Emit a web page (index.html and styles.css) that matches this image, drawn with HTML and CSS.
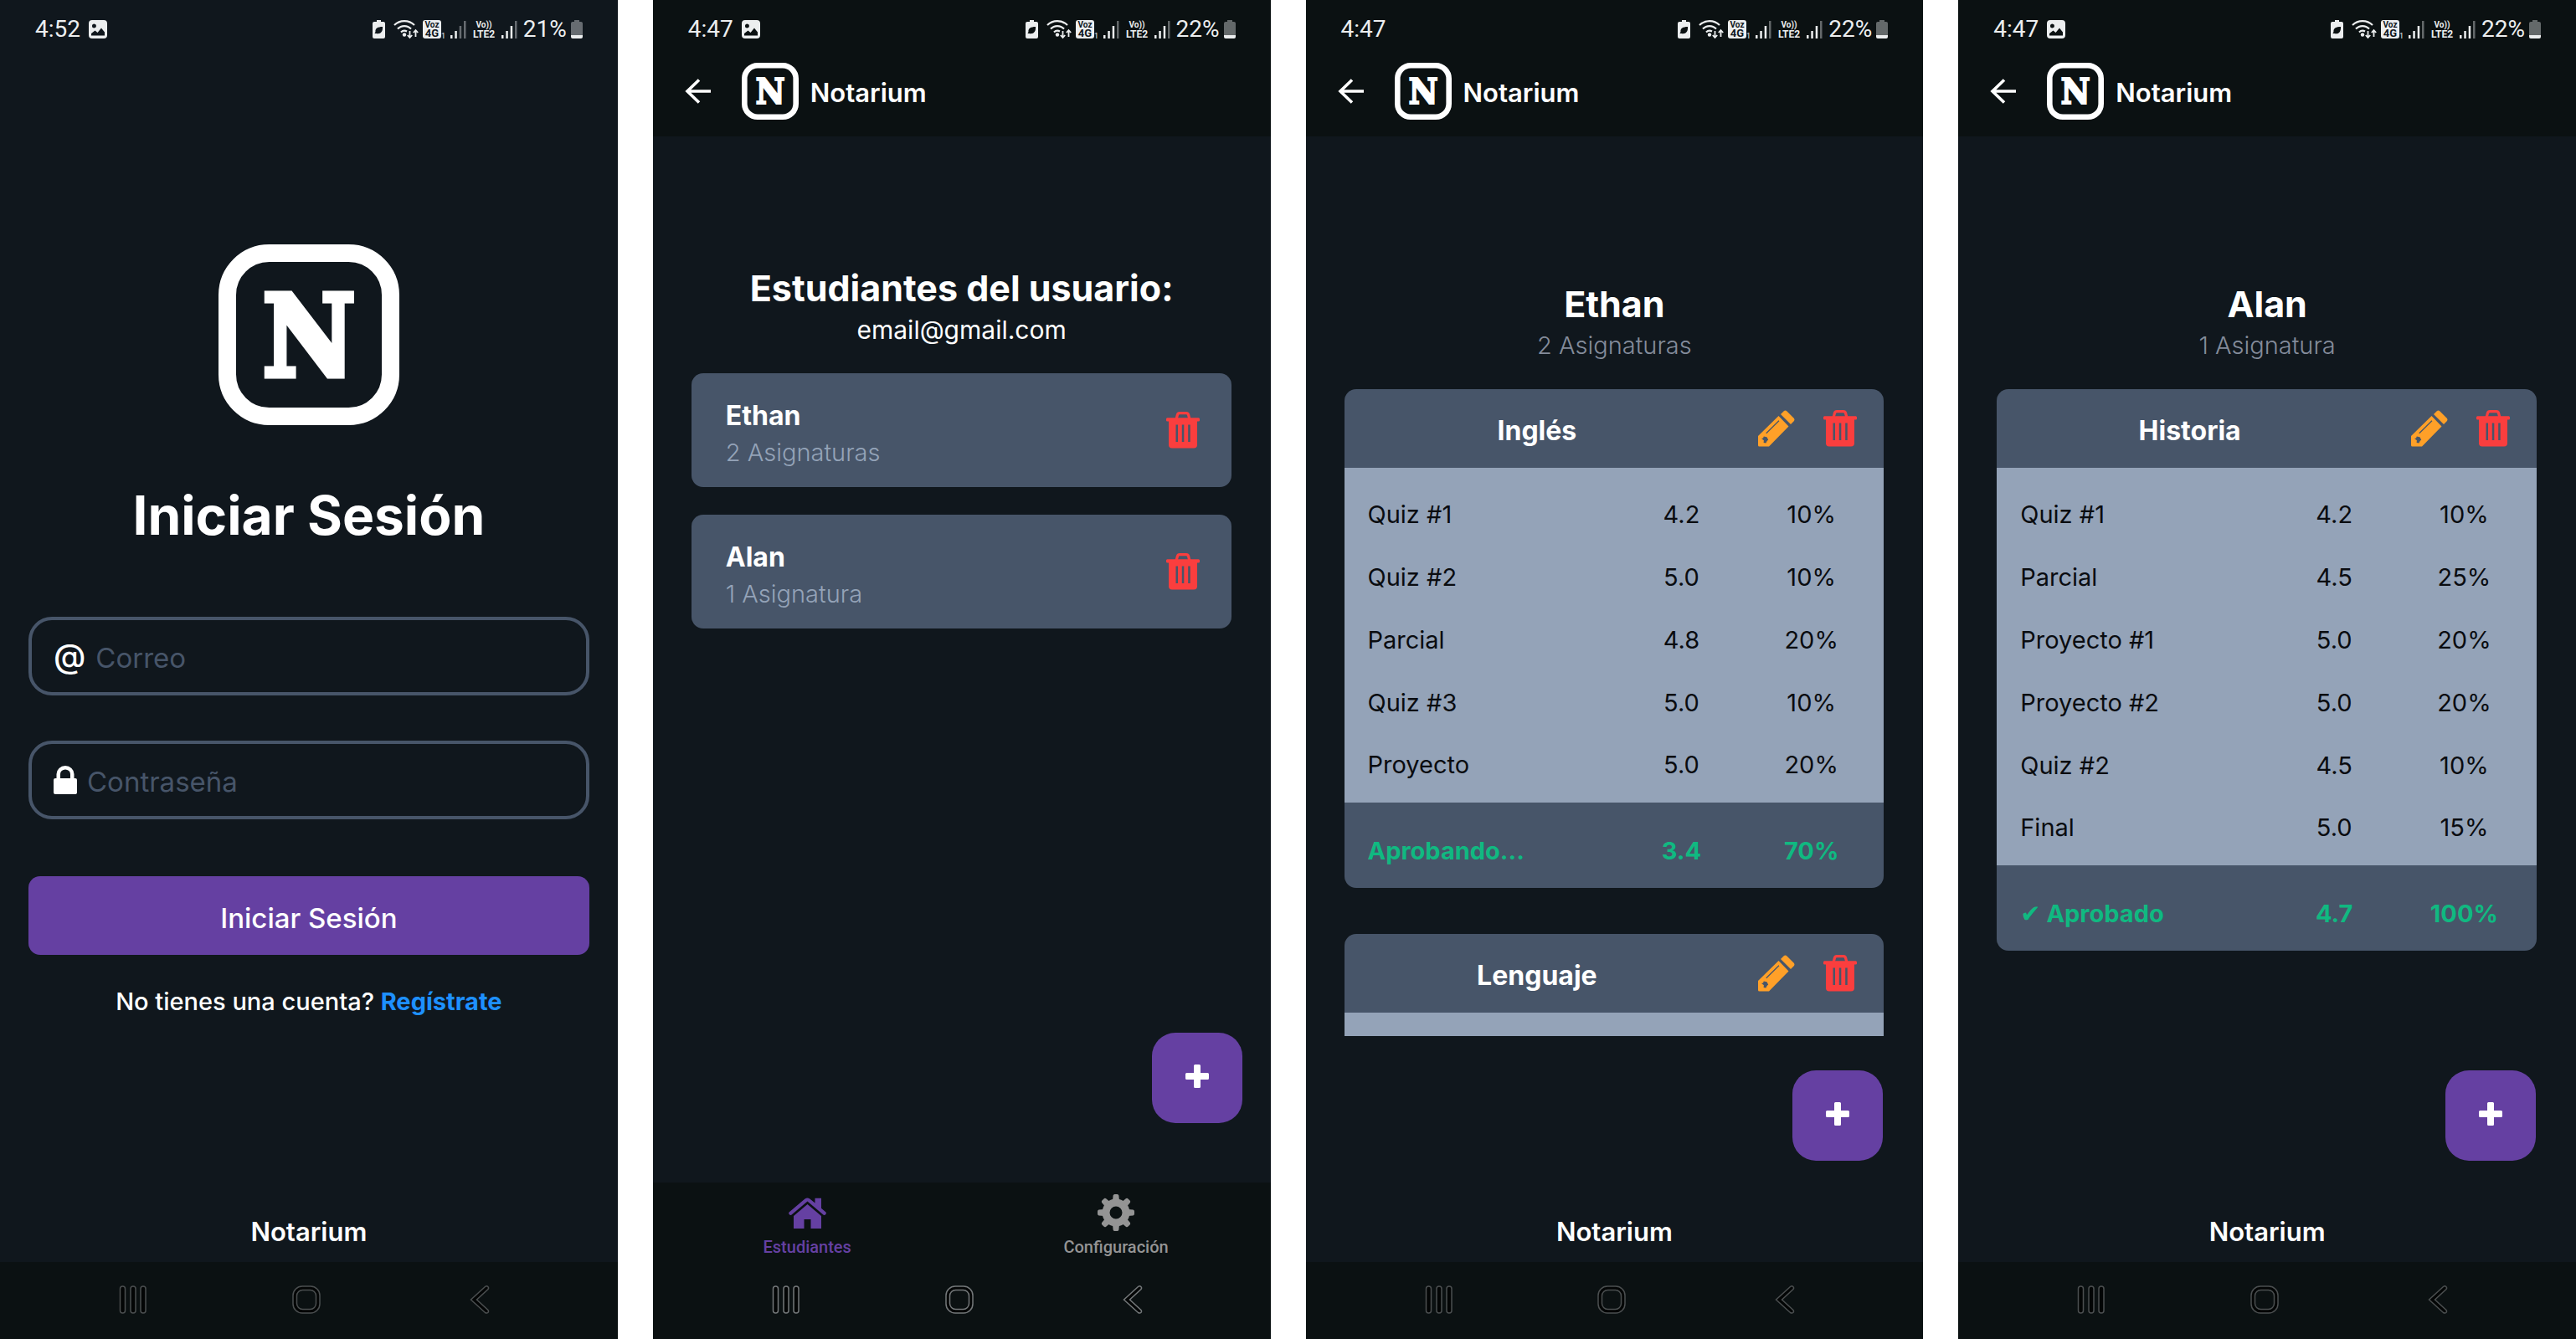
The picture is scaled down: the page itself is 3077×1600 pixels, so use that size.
FILE: index.html
```html
<!DOCTYPE html>
<html lang="es">
<head>
<meta charset="utf-8">
<meta name="viewport" content="width=device-width, initial-scale=1">
<title>Notarium</title>
<link rel="stylesheet" href="styles.css">
</head>
<body>
<svg class="sprite" aria-hidden="true">
  <symbol id="i-image" viewBox="0 0 22 22"><path fill-rule="evenodd" d="M4 0h14a4 4 0 0 1 4 4v14a4 4 0 0 1-4 4H4a4 4 0 0 1-4-4V4a4 4 0 0 1 4-4zM6.500 4.500a2.500 2.500 0 1 0 0 5 2.500 2.500 0 0 0 0-5zM3 18.500h16v-4l-4-5-4.500 5.500-3-2.500L3 16z"/></symbol>
  <symbol id="i-eco" viewBox="0 0 15 22"><path fill-rule="evenodd" d="M5 0h5v2h3a2 2 0 0 1 2 2v16a2 2 0 0 1-2 2H2a2 2 0 0 1-2-2V4a2 2 0 0 1 2-2h3zM12 8C6 8 3 10 3.500 14L2.500 16h2c5 1 8-2 7.500-8z"/></symbol>
  <symbol id="i-wifi" viewBox="0 0 30 24"><g fill="none" stroke="currentColor" stroke-width="2.200"><path d="M1 7a17 17 0 0 1 24 0M5 11.500a11 11 0 0 1 16 0M9 15.500a6 6 0 0 1 7-1"/><path stroke-width="1.800" d="M19.500 14v8M16.800 19l2.700 3 2.700-3M26.500 21v-8M23.800 16l2.700-3 2.700 3"/></g><circle cx="13" cy="18.500" r="2.200"/></symbol>
  <symbol id="i-signal2" viewBox="0 0 19 21"><path d="M0 17h2.500v4H0zM5.300 12h2.500v9H5.300z"/><path opacity=".4" d="M10.700 6h2.500v15h-2.500zM16 0h2.500v21H16z"/></symbol>
  <symbol id="i-signal3" viewBox="0 0 19 21"><path d="M0 17h2.500v4H0zM5.300 12h2.500v9H5.300zM10.700 6h2.500v15h-2.500z"/><path opacity=".4" d="M16 0h2.500v21H16z"/></symbol>
  <symbol id="i-battery" viewBox="0 0 14 22"><path opacity=".4" d="M4 0h6v2h2a2 2 0 0 1 2 2v15H0V4a2 2 0 0 1 2-2h2z"/><path d="M0 18h14v2a2 2 0 0 1-2 2H2a2 2 0 0 1-2-2z"/></symbol>
  <symbol id="i-back" viewBox="0 0 32 30"><path fill="none" stroke="currentColor" stroke-width="3.600" d="M31 15H3M17 1.500L3 15l14 13.500"/></symbol>
  <symbol id="i-trash" viewBox="0 0 40 44"><path fill="none" stroke="currentColor" stroke-width="3.200" d="M12 9l1.500-5.500Q14 1.600 16 1.600h8q2 0 2.500 1.900L28 9"/><path fill-rule="evenodd" d="M1.500 7.300h37a1.500 1.500 0 0 1 1.500 2v1.200q0 1-1.500 1H37V39.500a4 4 0 0 1-4 4H7a4 4 0 0 1-4-4v-28H1.500Q0 11.500 0 10.500V9.300a1.500 1.500 0 0 1 1.500-2zM11.500 15.500v20.500H14V15.500zM18.800 15.500v20.500h2.500V15.500zM26.200 15.500v20.500h2.500V15.500z"/></symbol>
  <symbol id="i-pencil" viewBox="0 0 44 44"><path fill-rule="evenodd" d="M24.500 7L36.500 19.500 13 43.500H1.500Q0 43.500 0 42V31zM9.300 27.300l.9.900L25.400 13.200l-.9-.9zM4 34l2-.6.800-2 3.600.8 1.800 3.300-1.600 1.400-1.200 2.600-2.800-.4.300-2.800z"/><path d="M27 5l3.500-3.600q2-1.800 4 0l8 8q1.800 2 0 4L39 17z"/></symbol>
  <symbol id="i-home" viewBox="0 0 45 37"><path d="M.6 17.500L19.500 1.400q3-2 5.800 0L31.500 6.600V.800H39v12l5.500 4.700q.8 1.200-.2 2.500t-2.600.8L22.500 4.600 3.300 20.800q-1.600.5-2.600-.8t-.1-2.500z"/><path d="M22.500 8L39 22v15H26.500V26h-8v11H6V22z"/></symbol>
  <symbol id="i-gear" viewBox="0 0 44 44"><path id="tooth" d="M18 8l.6-6.500Q19 0 20.500 0h3q1.500 0 1.900 1.500L26 8zM18 36l.6 6.500q.4 1.500 1.900 1.500h3q1.500 0 1.900-1.500L26 36z"/><use href="#tooth" transform="rotate(45 22 22)"/><use href="#tooth" transform="rotate(90 22 22)"/><use href="#tooth" transform="rotate(135 22 22)"/><path fill-rule="evenodd" d="M22 5.500a16.500 16.500 0 1 0 0 33 16.500 16.500 0 0 0 0-33zM22 14.500a7.500 7.500 0 1 1 0 15 7.500 7.500 0 0 1 0-15z"/></symbol>
  <symbol id="i-plus" viewBox="0 0 28 28"><path d="M11.500 0h5a1.500 1.500 0 0 1 1.500 1.500V10h8.500a1.500 1.500 0 0 1 1.500 1.500v5a1.500 1.500 0 0 1-1.500 1.500H18v8.500a1.500 1.500 0 0 1-1.500 1.500h-5a1.500 1.500 0 0 1-1.500-1.500V18H1.500A1.500 1.500 0 0 1 0 16.500v-5A1.500 1.500 0 0 1 1.500 10H10V1.500A1.500 1.500 0 0 1 11.500 0z"/></symbol>
  <symbol id="i-lock" viewBox="0 0 28 34"><path fill-rule="evenodd" d="M3.500 15v-5a10.500 10 0 0 1 21 0v5H26a2 2 0 0 1 2 2v15a2 2 0 0 1-2 2H2a2 2 0 0 1-2-2V17a2 2 0 0 1 2-2zM8 15h12v-5a6 5.500 0 0 0-12 0z"/></symbol>
  <symbol id="n-recents" viewBox="0 0 34 34"><g class="nav-line"><rect x="1.500" y="1" width="6" height="32" rx="3"/><rect x="14" y="1" width="6" height="32" rx="3"/><rect x="26" y="1" width="6" height="32" rx="3"/></g></symbol>
  <symbol id="n-home" viewBox="0 0 34 34"><g class="nav-line"><rect x="1" y="1" width="32" height="32" rx="11"/><rect class="nav-hole" x="5.500" y="5.500" width="23" height="23" rx="7"/></g></symbol>
  <symbol id="n-back" viewBox="0 0 24 34"><path class="nav-line" d="M18.500 1.500L1.500 17l17 15.500q2 1.200 3.300 0t.2-3L8.500 17 22 4.500q1.200-1.700-.2-3t-3.300 0z"/></symbol>
</svg>

<main class="board">

  <section class="screen">
    <div class="status">
      <span class="clock">4:52</span><svg class="ic-image"><use href="#i-image"/></svg>
      <div class="status-right">
        <svg class="ic-eco"><use href="#i-eco"/></svg><svg class="ic-wifi"><use href="#i-wifi"/></svg>
        <svg class="ic-voz" viewBox="0 -4 28 30"><rect width="22" height="22" rx="3"/><text class="cut voz" x="11" y="9">Voz</text><text class="cut g4" x="11" y="20">4G</text><text class="sub" x="22" y="22">1</text></svg>
        <svg class="ic-signal"><use href="#i-signal2"/></svg>
        <svg class="ic-lte" viewBox="0 -4 32 30"><text class="vo" x="16" y="9">Vo))</text><text class="lte" x="16" y="21">LTE2</text></svg>
        <svg class="ic-signal"><use href="#i-signal3"/></svg>
        <span class="percent">21%</span><svg class="ic-battery"><use href="#i-battery"/></svg>
      </div>
    </div>
    <div class="login">
      <svg class="logo-large" viewBox="0 0 216 216" role="img" aria-label="Logo"><rect class="logo-frame" x="10.500" y="10.500" width="195" height="195" rx="50"/><text class="logo-letter" x="108" y="157">N</text></svg>
      <h1 class="login-title">Iniciar Sesión</h1>
      <form class="login-form">
        <label class="field"><span class="at">@</span><input type="email" placeholder="Correo" aria-label="Correo"></label>
        <label class="field"><svg class="ic-lock"><use href="#i-lock"/></svg><input type="password" placeholder="Contraseña" aria-label="Contraseña"></label>
        <button class="submit" type="button">Iniciar Sesión</button>
      </form>
      <p class="signup">No tienes una cuenta? <a href="#">Regístrate</a></p>
    </div>
    <footer class="brand">Notarium</footer>
    <nav class="sysnav"><svg><use href="#n-recents"/></svg><svg><use href="#n-home"/></svg><svg><use href="#n-back"/></svg></nav>
  </section>

  <section class="screen">
    <header class="topbar">
      <div class="status">
        <span class="clock">4:47</span><svg class="ic-image"><use href="#i-image"/></svg>
        <div class="status-right">
          <svg class="ic-eco"><use href="#i-eco"/></svg><svg class="ic-wifi"><use href="#i-wifi"/></svg>
          <svg class="ic-voz" viewBox="0 -4 28 30"><rect width="22" height="22" rx="3"/><text class="cut voz" x="11" y="9">Voz</text><text class="cut g4" x="11" y="20">4G</text><text class="sub" x="22" y="22">1</text></svg>
          <svg class="ic-signal"><use href="#i-signal3"/></svg>
          <svg class="ic-lte" viewBox="0 -4 32 30"><text class="vo" x="16" y="9">Vo))</text><text class="lte" x="16" y="21">LTE2</text></svg>
          <svg class="ic-signal"><use href="#i-signal3"/></svg>
          <span class="percent">22%</span><svg class="ic-battery"><use href="#i-battery"/></svg>
        </div>
      </div>
      <div class="appbar">
        <button class="icon-btn back" type="button" aria-label="Volver"><svg class="ic-back"><use href="#i-back"/></svg></button>
        <svg class="logo-small" viewBox="0 0 216 216" role="img" aria-label="Logo"><rect class="logo-frame" x="10.500" y="10.500" width="195" height="195" rx="50"/><text class="logo-letter" x="108" y="157">N</text></svg>
        <span class="app-name">Notarium</span>
      </div>
    </header>
    <div class="heading heading-users">
      <h2>Estudiantes del usuario:</h2>
      <p class="email">email@gmail.com</p>
    </div>
    <ul class="list students">
      <li class="student"><div><h3>Ethan</h3><p>2 Asignaturas</p></div><button class="icon-btn" type="button" aria-label="Eliminar"><svg class="ic-trash"><use href="#i-trash"/></svg></button></li>
      <li class="student"><div><h3>Alan</h3><p>1 Asignatura</p></div><button class="icon-btn" type="button" aria-label="Eliminar"><svg class="ic-trash"><use href="#i-trash"/></svg></button></li>
    </ul>
    <div class="actions actions-tabs"><button class="fab" type="button" aria-label="Agregar"><svg class="ic-plus"><use href="#i-plus"/></svg></button></div>
    <nav class="tabs">
      <a class="tab active" href="#"><svg class="ic-home"><use href="#i-home"/></svg><span>Estudiantes</span></a>
      <a class="tab" href="#"><svg class="ic-gear"><use href="#i-gear"/></svg><span>Configuración</span></a>
    </nav>
    <nav class="sysnav bright"><svg><use href="#n-recents"/></svg><svg><use href="#n-home"/></svg><svg><use href="#n-back"/></svg></nav>
  </section>

  <section class="screen">
    <header class="topbar">
      <div class="status">
        <span class="clock">4:47</span>
        <div class="status-right">
          <svg class="ic-eco"><use href="#i-eco"/></svg><svg class="ic-wifi"><use href="#i-wifi"/></svg>
          <svg class="ic-voz" viewBox="0 -4 28 30"><rect width="22" height="22" rx="3"/><text class="cut voz" x="11" y="9">Voz</text><text class="cut g4" x="11" y="20">4G</text><text class="sub" x="22" y="22">1</text></svg>
          <svg class="ic-signal"><use href="#i-signal3"/></svg>
          <svg class="ic-lte" viewBox="0 -4 32 30"><text class="vo" x="16" y="9">Vo))</text><text class="lte" x="16" y="21">LTE2</text></svg>
          <svg class="ic-signal"><use href="#i-signal3"/></svg>
          <span class="percent">22%</span><svg class="ic-battery"><use href="#i-battery"/></svg>
        </div>
      </div>
      <div class="appbar">
        <button class="icon-btn back" type="button" aria-label="Volver"><svg class="ic-back"><use href="#i-back"/></svg></button>
        <svg class="logo-small" viewBox="0 0 216 216" role="img" aria-label="Logo"><rect class="logo-frame" x="10.500" y="10.500" width="195" height="195" rx="50"/><text class="logo-letter" x="108" y="157">N</text></svg>
        <span class="app-name">Notarium</span>
      </div>
    </header>
    <div class="heading">
      <h2>Ethan</h2>
      <p>2 Asignaturas</p>
    </div>
    <div class="list subjects">
      <article class="subject">
        <div class="subject-head"><h3>Inglés</h3><button class="icon-btn" type="button" aria-label="Editar"><svg class="ic-pencil"><use href="#i-pencil"/></svg></button><button class="icon-btn" type="button" aria-label="Eliminar"><svg class="ic-trash"><use href="#i-trash"/></svg></button></div>
        <table>
          <tbody>
            <tr><td>Quiz #1</td><td>4.2</td><td>10%</td></tr>
            <tr><td>Quiz #2</td><td>5.0</td><td>10%</td></tr>
            <tr><td>Parcial</td><td>4.8</td><td>20%</td></tr>
            <tr><td>Quiz #3</td><td>5.0</td><td>10%</td></tr>
            <tr><td>Proyecto</td><td>5.0</td><td>20%</td></tr>
          </tbody>
          <tfoot><tr><td>Aprobando...</td><td>3.4</td><td>70%</td></tr></tfoot>
        </table>
      </article>
      <article class="subject">
        <div class="subject-head"><h3>Lenguaje</h3><button class="icon-btn" type="button" aria-label="Editar"><svg class="ic-pencil"><use href="#i-pencil"/></svg></button><button class="icon-btn" type="button" aria-label="Eliminar"><svg class="ic-trash"><use href="#i-trash"/></svg></button></div>
        <div class="subject-body"></div>
      </article>
    </div>
    <div class="actions"><button class="fab" type="button" aria-label="Agregar"><svg class="ic-plus"><use href="#i-plus"/></svg></button></div>
    <footer class="brand">Notarium</footer>
    <nav class="sysnav"><svg><use href="#n-recents"/></svg><svg><use href="#n-home"/></svg><svg><use href="#n-back"/></svg></nav>
  </section>

  <section class="screen">
    <header class="topbar">
      <div class="status">
        <span class="clock">4:47</span><svg class="ic-image"><use href="#i-image"/></svg>
        <div class="status-right">
          <svg class="ic-eco"><use href="#i-eco"/></svg><svg class="ic-wifi"><use href="#i-wifi"/></svg>
          <svg class="ic-voz" viewBox="0 -4 28 30"><rect width="22" height="22" rx="3"/><text class="cut voz" x="11" y="9">Voz</text><text class="cut g4" x="11" y="20">4G</text><text class="sub" x="22" y="22">1</text></svg>
          <svg class="ic-signal"><use href="#i-signal3"/></svg>
          <svg class="ic-lte" viewBox="0 -4 32 30"><text class="vo" x="16" y="9">Vo))</text><text class="lte" x="16" y="21">LTE2</text></svg>
          <svg class="ic-signal"><use href="#i-signal3"/></svg>
          <span class="percent">22%</span><svg class="ic-battery"><use href="#i-battery"/></svg>
        </div>
      </div>
      <div class="appbar">
        <button class="icon-btn back" type="button" aria-label="Volver"><svg class="ic-back"><use href="#i-back"/></svg></button>
        <svg class="logo-small" viewBox="0 0 216 216" role="img" aria-label="Logo"><rect class="logo-frame" x="10.500" y="10.500" width="195" height="195" rx="50"/><text class="logo-letter" x="108" y="157">N</text></svg>
        <span class="app-name">Notarium</span>
      </div>
    </header>
    <div class="heading">
      <h2>Alan</h2>
      <p>1 Asignatura</p>
    </div>
    <div class="list subjects">
      <article class="subject">
        <div class="subject-head"><h3>Historia</h3><button class="icon-btn" type="button" aria-label="Editar"><svg class="ic-pencil"><use href="#i-pencil"/></svg></button><button class="icon-btn" type="button" aria-label="Eliminar"><svg class="ic-trash"><use href="#i-trash"/></svg></button></div>
        <table>
          <tbody>
            <tr><td>Quiz #1</td><td>4.2</td><td>10%</td></tr>
            <tr><td>Parcial</td><td>4.5</td><td>25%</td></tr>
            <tr><td>Proyecto #1</td><td>5.0</td><td>20%</td></tr>
            <tr><td>Proyecto #2</td><td>5.0</td><td>20%</td></tr>
            <tr><td>Quiz #2</td><td>4.5</td><td>10%</td></tr>
            <tr><td>Final</td><td>5.0</td><td>15%</td></tr>
          </tbody>
          <tfoot><tr><td>✔ Aprobado</td><td>4.7</td><td>100%</td></tr></tfoot>
        </table>
      </article>
    </div>
    <div class="actions"><button class="fab" type="button" aria-label="Agregar"><svg class="ic-plus"><use href="#i-plus"/></svg></button></div>
    <footer class="brand">Notarium</footer>
    <nav class="sysnav"><svg><use href="#n-recents"/></svg><svg><use href="#n-home"/></svg><svg><use href="#n-back"/></svg></nav>
  </section>

</main>
</body>
</html>
```
FILE: styles.css
```css
* { box-sizing: border-box; }

body, h1, h2, h3, p, ul { margin: 0; padding: 0; }

body {
  background: #fff;
  color: #fff;
  font-family: Inter, "DejaVu Sans", sans-serif;
  font-size: 29px;
  line-height: 36px;
}

svg { display: block; flex: none; fill: currentColor; }

.sprite { position: absolute; width: 0; height: 0; }

.board {
  display: grid;
  grid-template-columns: repeat(4, 1fr);
  gap: 42px;
  height: 100vh;
}

.screen {
  display: flex;
  flex-direction: column;
  min-width: 0;
  min-height: 0;
  background: #10171d;
}

/* status bar */
.topbar { background: #0b1112; }

.status {
  display: flex;
  align-items: center;
  height: 70px;
  padding: 0 42px;
  color: #eceeef;
  font-family: Roboto, "Liberation Sans", sans-serif;
  font-size: 28px;
}

.status-right {
  display: flex;
  align-items: center;
  gap: 5px;
  margin-left: auto;
}

.ic-image { width: 22px; height: 22px; margin-left: 10px; }
.ic-eco { width: 15px; height: 22px; margin-right: 5px; }
.ic-wifi { width: 30px; height: 24px; }
.ic-voz { width: 28px; height: 30px; }
.ic-signal { width: 19px; height: 21px; }
.ic-lte { width: 32px; height: 30px; }
.ic-battery { width: 14px; height: 22px; }
.percent { margin-left: 2px; }

.ic-voz text, .ic-lte text { font-weight: 700; text-anchor: middle; }
.ic-voz .cut { fill: #10171d; }
.voz, .vo { font-size: 10px; }
.g4 { font-size: 13px; }
.lte { font-size: 12px; }
.ic-voz .sub { font-size: 9px; font-weight: 400; text-anchor: start; }

/* app bar */
.appbar {
  display: flex;
  align-items: center;
  height: 93px;
  padding: 0 38px 16px;
}

.icon-btn {
  padding: 0;
  border: 0;
  background: none;
  color: inherit;
  cursor: pointer;
}

.ic-back { width: 32px; height: 30px; }
.logo-small { width: 68px; height: 68px; margin: 0 14px 0 36px; }
.app-name { font-size: 31px; font-weight: 600; padding-top: 4px; }

.logo-frame { fill: none; stroke: #fff; stroke-width: 21px; }

.logo-letter {
  stroke: #fff;
  stroke-width: 7px;
  font-family: "DejaVu Serif Condensed", "DejaVu Serif", serif;
  font-size: 134px;
  font-weight: 700;
  text-anchor: middle;
}

/* login */
.login {
  display: flex;
  flex: 1;
  flex-direction: column;
  align-items: center;
  padding: 222px 34px 0;
}

.logo-large { width: 216px; height: 216px; }

.login-title {
  margin-top: 72px;
  font-size: 64px;
  font-weight: 700;
  line-height: 72px;
}

.login-form {
  display: flex;
  flex-direction: column;
  align-self: stretch;
  margin-top: 85px;
}

.field {
  display: flex;
  align-items: center;
  gap: 12px;
  height: 94px;
  margin-bottom: 54px;
  padding: 0 26px;
  border: 4px solid #475569;
  border-radius: 28px;
}

.field input {
  flex: 1;
  min-width: 0;
  padding: 4px 0 0;
  border: 0;
  outline: 0;
  background: none;
  color: #fff;
  font: inherit;
  font-size: 33px;
}

.field input::placeholder { color: #475569; opacity: 1; }
.at { font-size: 39px; font-weight: 500; }
.ic-lock { width: 28px; height: 34px; }

.submit {
  height: 94px;
  margin-top: 14px;
  border: 0;
  border-radius: 14px;
  background: #6540a2;
  color: #fff;
  font: inherit;
  font-size: 33px;
  font-weight: 500;
  padding-top: 6px;
}

.signup { margin-top: 38px; font-weight: 500; }
.signup a { color: #1e90ff; font-weight: 700; text-decoration: none; }

/* headings */
.heading {
  padding: 176px 46px 0;
  text-align: center;
}

.heading-users { padding-top: 157px; }

.heading h2 {
  font-size: 43px;
  font-weight: 700;
  line-height: 48px;
}

.heading p { margin-top: 8px; color: #848c9b; font-weight: 300; }
.heading .email { color: #fff; font-size: 30px; font-weight: 400; }

.list {
  flex: 1;
  min-height: 0;
  margin: 34px 47px 0 46px;
  overflow: hidden;
}

/* students */
.students {
  display: flex;
  flex-direction: column;
  gap: 33px;
  list-style: none;
}

.student {
  display: flex;
  align-items: center;
  justify-content: space-between;
  height: 136px;
  padding: 0 38px 0 41px;
  border-radius: 14px;
  background: #475569;
}

.student h3 { font-size: 32px; font-weight: 700; padding-top: 10px; }
.student p { margin-top: 8px; color: #94a3b8; font-weight: 300; }

/* subjects */
.subject { margin-bottom: 55px; border-radius: 14px; background: #475569; overflow: hidden; }

.subject-head {
  display: flex;
  align-items: center;
  height: 94px;
  padding-right: 32px;
}

.subject-head h3 {
  flex: 1;
  padding: 6px 0 0;
  font-size: 32px;
  font-weight: 700;
  text-align: center;
}

.subject-head .icon-btn { margin-left: 34px; }

.subject-body { height: 400px; background: #94a3b8; }

table {
  width: 100%;
  border-spacing: 0;
  table-layout: fixed;
}

td { width: 25%; height: 75px; padding: 0; text-align: center; }
td:first-child { width: 50%; padding-left: 28px; text-align: left; }
td:last-child { padding-right: 12px; }

tbody { background: #94a3b8; color: #0a0c10; }
tbody tr:first-child td { height: 93px; padding-top: 18px; }
tbody tr:last-child td { height: 82px; padding-bottom: 8px; }
tfoot { color: #10b981; font-weight: 700; }
tfoot td { height: 102px; padding-top: 13px; }

.ic-trash { width: 40px; height: 44px; color: #fa3e3e; }
.ic-pencil { width: 44px; height: 44px; color: #ffa028; }

/* floating action */
.actions {
  display: flex;
  justify-content: flex-end;
  padding: 41px 48px 0;
}

.actions-tabs { padding: 0 34px 71px; }

.fab {
  display: grid;
  place-items: center;
  width: 108px;
  height: 108px;
  padding: 0 0 4px;
  border: 0;
  border-radius: 28px;
  background: #6540a2;
  color: #fff;
}

.ic-plus { width: 28px; height: 28px; }

/* footer and tabs */
.brand {
  height: 121px;
  padding: 67px 0 0;
  font-size: 31px;
  font-weight: 600;
  text-align: center;
}

.tabs { display: flex; height: 95px; background: #0b1112; }

.tab {
  display: flex;
  flex: 1;
  flex-direction: column;
  align-items: center;
  justify-content: flex-end;
  gap: 7px;
  padding-bottom: 6px;
  color: #949494;
  font-family: Roboto, "Liberation Sans", sans-serif;
  font-size: 20px;
  font-weight: 500;
  line-height: 24px;
  text-decoration: none;
}

.tab.active { color: #6540a2; }
.ic-home { width: 45px; height: 37px; margin-bottom: 3px; }
.ic-gear { width: 44px; height: 44px; }

/* system navigation */
.sysnav {
  display: flex;
  align-items: center;
  justify-content: space-between;
  height: 92px;
  padding: 0 148px 2px 142px;
  background: #0b1112;
  color: #4b4f50;
}

.sysnav.bright { color: #74787a; }
.sysnav svg { width: 34px; height: 34px; }
.nav-line { fill: #030505; stroke: currentColor; stroke-width: 1.5px; }
.nav-hole { fill: #0b1112; }
```
